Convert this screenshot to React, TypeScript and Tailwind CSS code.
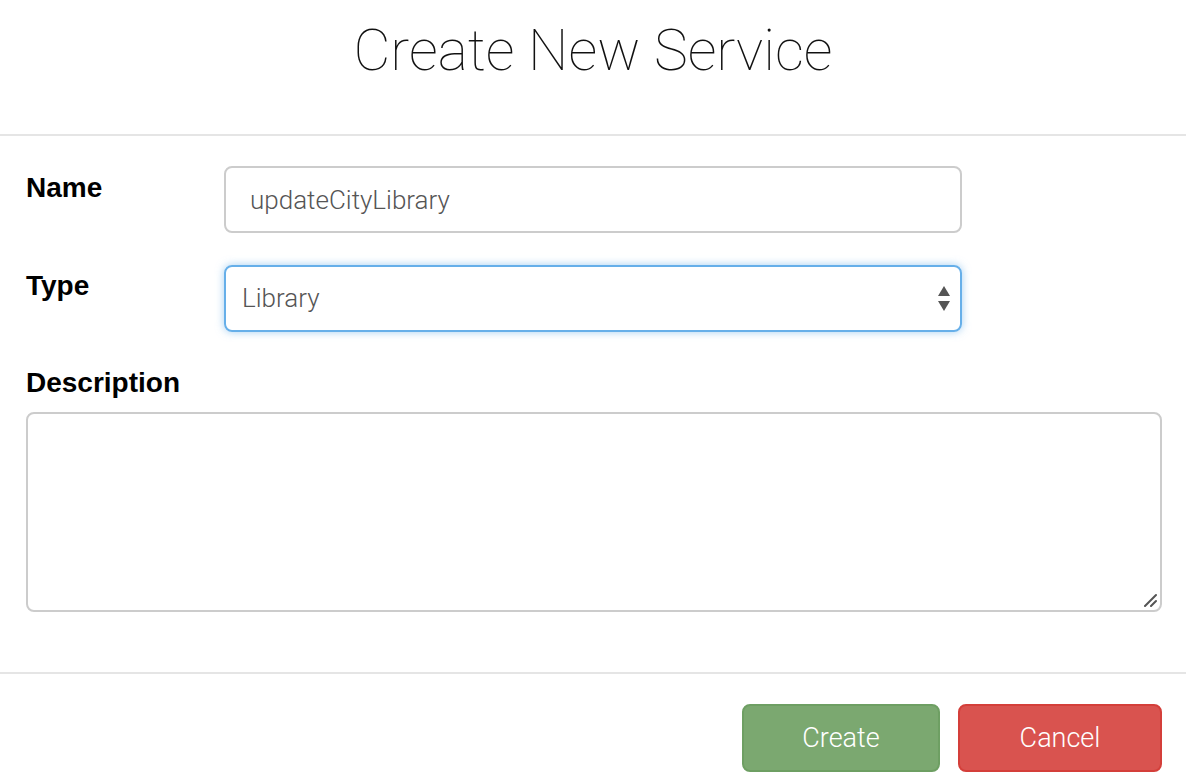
export default function App() {
  return (
    <div className="min-h-screen bg-white font-['Liberation_Sans',Arial,sans-serif] text-black">
      <div className="h-[136px] border-b-2 border-[#e5e5e5] pt-[15px] text-center">
        <h1 className="font-['Roboto',sans-serif] text-[57px] font-thin leading-[72px] text-[#111]">
          Create New Service
        </h1>
      </div>

      <div className="px-[26px] pt-[30px] pb-[60px]">
        <div className="flex items-start">
          <label className="w-[198px] pt-[5px] text-[28px] font-bold leading-[34px]">Name</label>
          <input
            className="h-[67px] w-[738px] rounded-[8px] border-2 border-[#cccccc] px-[24px] font-['Roboto',sans-serif] text-[26px] font-light text-[#555] outline-none"
            defaultValue="updateCityLibrary"
          />
        </div>

        <div className="mt-[32px] flex items-start">
          <label className="w-[198px] pt-[4px] text-[28px] font-bold leading-[34px]">Type</label>
          <div className="relative flex h-[67px] w-[738px] items-center rounded-[8px] border-2 border-[#66afe9] px-[16px] shadow-[0_0_8px_rgba(102,175,233,0.6)]">
            <span className="font-['Roboto',sans-serif] text-[26px] font-light text-[#555]">Library</span>
            <svg className="absolute right-[9px] top-[18px]" width="14" height="28" viewBox="0 0 14 28">
              <path d="M7 1 L13 11 L1 11 Z" fill="#555" />
              <path d="M1 16 L13 16 L7 26 Z" fill="#555" />
            </svg>
          </div>
        </div>

        <label className="mt-[34px] block text-[28px] font-bold leading-[34px]">Description</label>
        <div className="relative mt-[12px] w-[1136px]">
          <textarea className="block h-[200px] w-full resize-none rounded-[8px] border-2 border-[#cccccc] outline-none" />
          <svg className="absolute bottom-[5px] right-[5px]" width="14" height="14" viewBox="0 0 14 14">
            <path d="M2 13 L13 2 M8 13 L13 8" stroke="#555" strokeWidth="2" strokeLinecap="round" />
          </svg>
        </div>
      </div>

      <div className="flex justify-end gap-[18px] border-t-2 border-[#e5e5e5] pt-[30px] pr-[24px]">
        <button className="h-[68px] w-[198px] rounded-[8px] border-2 border-[#6e9f63] bg-[#7ba870] font-['Roboto',sans-serif] text-[27px] font-light text-white">
          Create
        </button>
        <button className="h-[68px] w-[204px] rounded-[8px] border-2 border-[#d43f3a] bg-[#d9534f] font-['Roboto',sans-serif] text-[27px] font-light text-white">
          Cancel
        </button>
      </div>
    </div>
  );
}
